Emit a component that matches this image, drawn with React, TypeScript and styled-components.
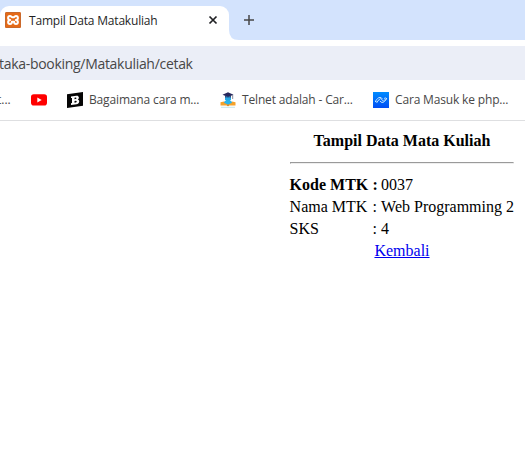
import React from "react";
import styled, { createGlobalStyle } from "styled-components";

const GlobalStyle = createGlobalStyle`
  * { box-sizing: border-box; }
  body { margin: 0; background: #fff; overflow: hidden; }
`;

const Window = styled.div`
  width: 525px;
  height: 455px;
  overflow: hidden;
  background: #fff;
  font-family: "Open Sans", "Noto Sans", sans-serif;
`;

const TabStrip = styled.div`
  display: flex;
  height: 40px;
  padding-top: 6px;
  background: #d3e3fd;
`;

const Tab = styled.div`
  display: flex;
  flex: none;
  align-items: center;
  width: 229px;
  height: 34px;
  padding: 0 11px 6px 5px;
  background: #fff;
  border-radius: 9px 9px 0 0;
`;

const TabTitle = styled.span`
  flex: 1;
  margin-left: 8px;
  padding-top: 2px;
  font-size: 12px;
  line-height: 16px;
  letter-spacing: -0.18px;
  white-space: nowrap;
  color: #1f1f1f;
`;

const CloseIcon = styled.svg`
  flex: none;
  width: 10px;
  height: 10px;
`;

const TabCurve = styled.svg`
  align-self: flex-end;
  width: 10px;
  height: 10px;
`;

const NewTab = styled.svg`
  width: 12px;
  height: 12px;
  margin: 8px 0 0 4px;
`;

const AddressBar = styled.div`
  height: 34px;
  margin-top: 6px;
  background: #ebeef7;
  color: #474747;
  font-size: 14px;
  line-height: 36px;
  white-space: nowrap;
`;

const Address = styled.span`
  margin-left: -1px;
  letter-spacing: -0.3px;
`;

const Bookmarks = styled.div`
  display: flex;
  align-items: center;
  height: 41px;
  border-bottom: 1px solid #dedfe1;
`;

const Bookmark = styled.div<{ $width: number }>`
  display: flex;
  flex: none;
  align-items: center;
  gap: 6px;
  width: ${(p) => p.$width}px;
  color: #474747;
  font-size: 12px;
  line-height: 16px;
  white-space: nowrap;
`;

const Label = styled.span<{ $tracking?: number }>`
  letter-spacing: ${(p) => p.$tracking ?? 0}px;
`;

const CutLabel = styled(Label)`
  margin-left: -3px;
`;

const Icon = styled.svg`
  flex: none;
  width: 16px;
  height: 16px;
`;

const Page = styled.main`
  width: 226px;
  margin: 9px 0 0 289px;
  color: #000;
  font: 16px/20px "Liberation Serif", "Times New Roman", serif;
`;

const Heading = styled.h1`
  margin: 0 1px;
  font-size: 16px;
  line-height: 22px;
  text-align: center;
  white-space: nowrap;
`;

const Rule = styled.hr`
  width: 224px;
  height: 2px;
  margin: 10px 1px;
  border: 1px solid;
  border-color: #9a9a9a #eee #eee #9a9a9a;
`;

const Row = styled.div<{ $strong?: boolean }>`
  display: grid;
  grid-template-columns: 83px 8.5px 1fr;
  height: 22px;
  padding-left: 0.6px;
  line-height: 22px;
  white-space: nowrap;
  dt, span { font-weight: ${(p) => (p.$strong ? "bold" : "normal")}; }
  dd { margin: 0; }
`;

const Details = styled.dl`
  margin: 0;
`;

const Back = styled.a`
  display: block;
  line-height: 22px;
  text-align: center;
  color: #0000ee;
  text-decoration: underline;
`;

const rows = [
  { name: "Kode MTK", value: "0037", strong: true },
  { name: "Nama MTK", value: "Web Programming 2", strong: false },
  { name: "SKS", value: "4", strong: false },
];

const XamppIcon = () => (
  <Icon viewBox="0 0 16 16">
    <rect width="16" height="16" rx="1.5" fill="#e56a17" />
    <rect x=".5" y=".5" width="15" height="15" rx="1" fill="none" stroke="#c9692c" />
    <path
      d="M5.200 8C3.700 7.700 3.100 7 3.100 5.900 3.100 4.800 3.900 4 5 4c1.500 0 1.500 1.300 3 1.300S9.500 4 11 4c1.100 0 1.900.8 1.900 1.900 0 1.100-.6 1.800-2.100 2.100 1.500.3 2.100 1 2.100 2.100S12.100 12 11 12c-1.400 0-1.900-.8-1.900-2.300H6.900C6.900 11.200 6.400 12 5 12c-1.100 0-1.900-.8-1.900-1.900S3.700 8.300 5.200 8z"
      fill="none"
      stroke="#fff"
      strokeWidth="2"
      strokeLinejoin="round"
    />
  </Icon>
);

const YoutubeIcon = () => (
  <Icon viewBox="0 0 16 16">
    <rect y="2.300" width="16" height="11.300" rx="2.800" fill="#f00" />
    <path d="M6.300 5.500v5L10.700 8z" fill="#fff" />
  </Icon>
);

const SlantedBIcon = () => (
  <Icon viewBox="0 0 16 16">
    <path d="M0 2.200 16 0v13.700L0 16z" fill="#050505" />
    <path
      fillRule="evenodd"
      d="m4 4.600 5.500-.8c2.500-.3 3.200 2.700 1.300 3.700 2.400.7 1.700 4.300-1.300 4.700L4 13v-1.700l1-.2V6l-1 .1zm3.500 1.200v1.500l1.200-.2c1-.2 1-1.600 0-1.500zm0 3.100v1.800l1.300-.2c1.200-.2 1.200-1.900 0-1.800z"
      fill="#fff"
    />
  </Icon>
);

const GraduateIcon = () => (
  <Icon viewBox="0 0 16 16">
    <path d="M5 4h6v3.500L9.700 9H6.300L5 7.500z" fill="#27a9e5" />
    <path d="M2.500 2.700 8 .2l5.500 2.500L8 5z" fill="#28285c" />
    <path d="M5 4v1.600c1.500-.8 4.500-.8 6 0V4L8 5.200z" fill="#343566" />
    <path d="M12.700 3v4" stroke="#666b7d" strokeWidth=".8" />
    <path d="M.5 10.300 4 9.500l4 2 4-2 3.500.8v3.200H9.500L8 14.200l-1.500-.7h-6z" fill="#f5a12a" />
    <path d="M4 10.800C4.400 9 6 8.300 8 8.300s3.600.7 4 2.500L8 12.800z" fill="#29b4eb" />
    <path d="M8 12.500v1.600" stroke="#ba681c" strokeWidth=".8" />
    <path d="M1 15.300h14" stroke="#b8dce3" strokeWidth=".8" />
  </Icon>
);

const WaveIcon = () => (
  <Icon viewBox="0 0 16 16">
    <defs>
      <linearGradient id="wave-blue" x2="0" y2="1">
        <stop stopColor="#008cff" />
        <stop offset="1" stopColor="#004df4" />
      </linearGradient>
    </defs>
    <rect width="16" height="16" fill="url(#wave-blue)" />
    <path
      d="M4.200 9.700 6.600 7.100c.7-.7 1.500-.6 2 .1l.8 1.300c.5.7 1.200.7 1.900 0l1.400-1.500M2.500 9.500C2.500 8.500 3.600 7.600 4.500 6.600c1.500-1.600 3.700-1.700 4.700 0M2.500 9.500c.4 1 1.500 1 2.300.2M13.600 6.600c0 1-1.200 2-2.100 2.900-1.500 1.500-3.500 1.300-4.400-.3M13.600 6.600c-.4-1-1.500-1-2.400-.1"
      fill="none"
      stroke="#d8f1ff"
      strokeWidth=".9"
      strokeLinecap="round"
    />
  </Icon>
);

export default function App() {
  return (
    <Window>
      <GlobalStyle />
      <TabStrip>
        <Tab>
          <XamppIcon />
          <TabTitle>Tampil Data Matakuliah</TabTitle>
          <CloseIcon viewBox="0 0 10 10">
            <path d="m1.500 1.500 7 7m0-7-7 7" stroke="#202124" strokeWidth="1.700" />
          </CloseIcon>
        </Tab>
        <TabCurve viewBox="0 0 10 10">
          <path d="M0 0Q0 10 10 10H0z" fill="#fff" />
        </TabCurve>
        <NewTab viewBox="0 0 12 12">
          <path d="M6 1v10M1 6h10" stroke="#474747" strokeWidth="1.500" />
        </NewTab>
      </TabStrip>
      <AddressBar>
        <Address>taka-booking/Matakuliah/cetak</Address>
      </AddressBar>
      <Bookmarks>
        <Bookmark $width={31}>
          <CutLabel>t...</CutLabel>
        </Bookmark>
        <Bookmark $width={36}>
          <YoutubeIcon />
        </Bookmark>
        <Bookmark $width={153}>
          <SlantedBIcon />
          <Label $tracking={-0.15}>Bagaimana cara m...</Label>
        </Bookmark>
        <Bookmark $width={153}>
          <GraduateIcon />
          <Label $tracking={-0.16}>Telnet adalah - Car...</Label>
        </Bookmark>
        <Bookmark $width={150}>
          <WaveIcon />
          <Label $tracking={-0.16}>Cara Masuk ke php...</Label>
        </Bookmark>
      </Bookmarks>
      <Page>
        <Heading>Tampil Data Mata Kuliah</Heading>
        <Rule />
        <Details>
          {rows.map((row) => (
            <Row key={row.name} $strong={row.strong}>
              <dt>{row.name}</dt>
              <span>:</span>
              <dd>{row.value}</dd>
            </Row>
          ))}
        </Details>
        <Back href="#">Kembali</Back>
      </Page>
    </Window>
  );
}
